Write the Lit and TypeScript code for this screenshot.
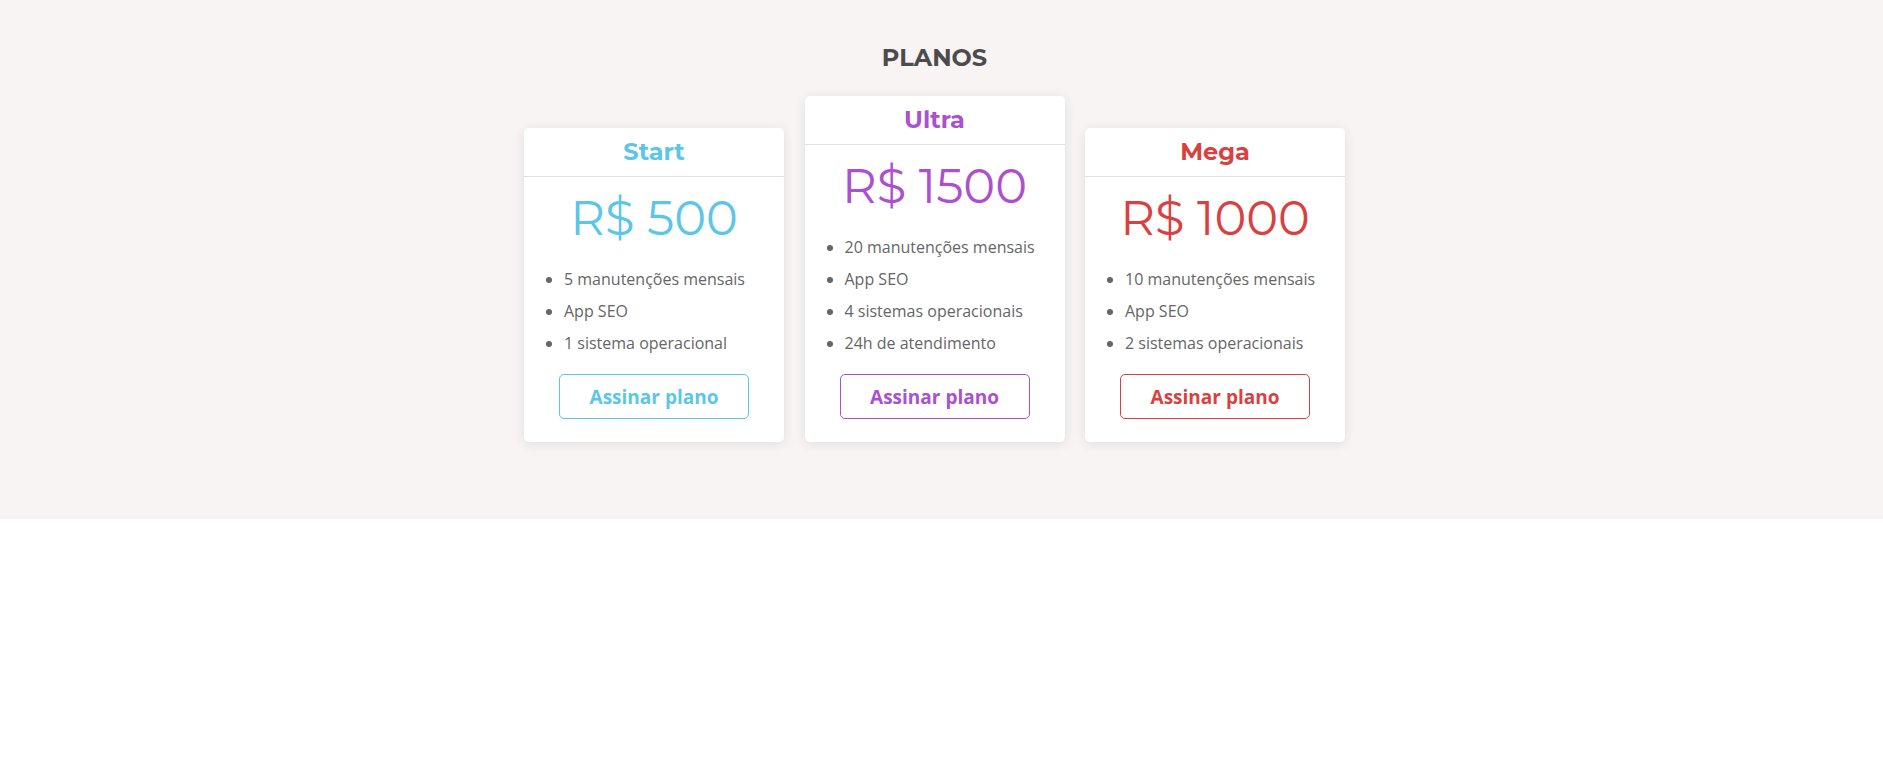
import { LitElement, html, css } from "lit";
import { customElement, property } from "lit/decorators.js";

interface Plan {
  tone: string;
  name: string;
  price: string;
  features: string[];
}

const PLANS: Plan[] = [
  {
    tone: "start",
    name: "Start",
    price: "R$ 500",
    features: ["5 manutenções mensais", "App SEO", "1 sistema operacional"],
  },
  {
    tone: "ultra",
    name: "Ultra",
    price: "R$ 1500",
    features: ["20 manutenções mensais", "App SEO", "4 sistemas operacionais", "24h de atendimento"],
  },
  {
    tone: "mega",
    name: "Mega",
    price: "R$ 1000",
    features: ["10 manutenções mensais", "App SEO", "2 sistemas operacionais"],
  },
];

@customElement("plan-card")
export class PlanCard extends LitElement {
  @property({ attribute: false }) plan!: Plan;

  static styles = css`
    :host {
      display: block;
      width: 260px;
    }
    .card {
      background: #fff;
      border-radius: 5px;
      box-shadow: 0 2px 12px rgba(50, 40, 60, 0.1);
      padding-bottom: 23px;
      text-align: center;
    }
    .start { --tone: #5bc6e8; }
    .ultra { --tone: #ab50d0; }
    .mega { --tone: #d94141; }
    .name,
    .price {
      margin: 0;
      color: var(--tone);
      font-family: Montserrat, Inter, sans-serif;
    }
    .name {
      font-size: 24px;
      font-weight: 700;
      line-height: 48px;
      border-bottom: 1px solid #dfdfe1;
    }
    .price {
      padding-bottom: 4px;
      font-size: 48px;
      font-weight: 400;
      line-height: 82px;
    }
    .features {
      margin: 0 0 15px;
      padding: 0 0 0 40px;
      text-align: left;
      font-size: 16px;
      line-height: 32px;
      color: #666;
    }
    .subscribe {
      width: 190px;
      height: 45px;
      padding: 0;
      border: 1px solid var(--tone);
      border-radius: 5px;
      background: #fff;
      color: var(--tone);
      font-family: inherit;
      font-size: 19px;
      font-weight: 700;
      display: block;
      margin: 0 auto;
      cursor: pointer;
    }
  `;

  render() {
    const { tone, name, price, features } = this.plan;
    return html`
      <article class="card ${tone}">
        <h3 class="name">${name}</h3>
        <p class="price">${price}</p>
        <ul class="features">
          ${features.map((f) => html`<li>${f}</li>`)}
        </ul>
        <button class="subscribe" type="button">Assinar plano</button>
      </article>
    `;
  }
}

@customElement("app-root")
export class AppRoot extends LitElement {
  static styles = css`
    :host {
      display: block;
      font-family: "Open Sans", sans-serif;
    }
    .plans {
      background: #f7f4f3;
      padding: 34px 14px 77px 0;
    }
    .title {
      margin: 0 0 14px;
      text-align: center;
      font-family: Montserrat, Inter, sans-serif;
      font-size: 24px;
      font-weight: 700;
      line-height: 48px;
      color: #4c4c4c;
    }
    .cards {
      display: flex;
      flex-wrap: wrap;
      align-items: flex-end;
      justify-content: space-between;
      max-width: 821px;
      margin: 0 auto;
    }
    @media (max-width: 840px) {
      .cards {
        justify-content: center;
        gap: 20px;
      }
    }
  `;

  render() {
    return html`
      <section class="plans">
        <h2 class="title">PLANOS</h2>
        <div class="cards">
          ${PLANS.map((p) => html`<plan-card .plan=${p}></plan-card>`)}
        </div>
      </section>
    `;
  }
}
